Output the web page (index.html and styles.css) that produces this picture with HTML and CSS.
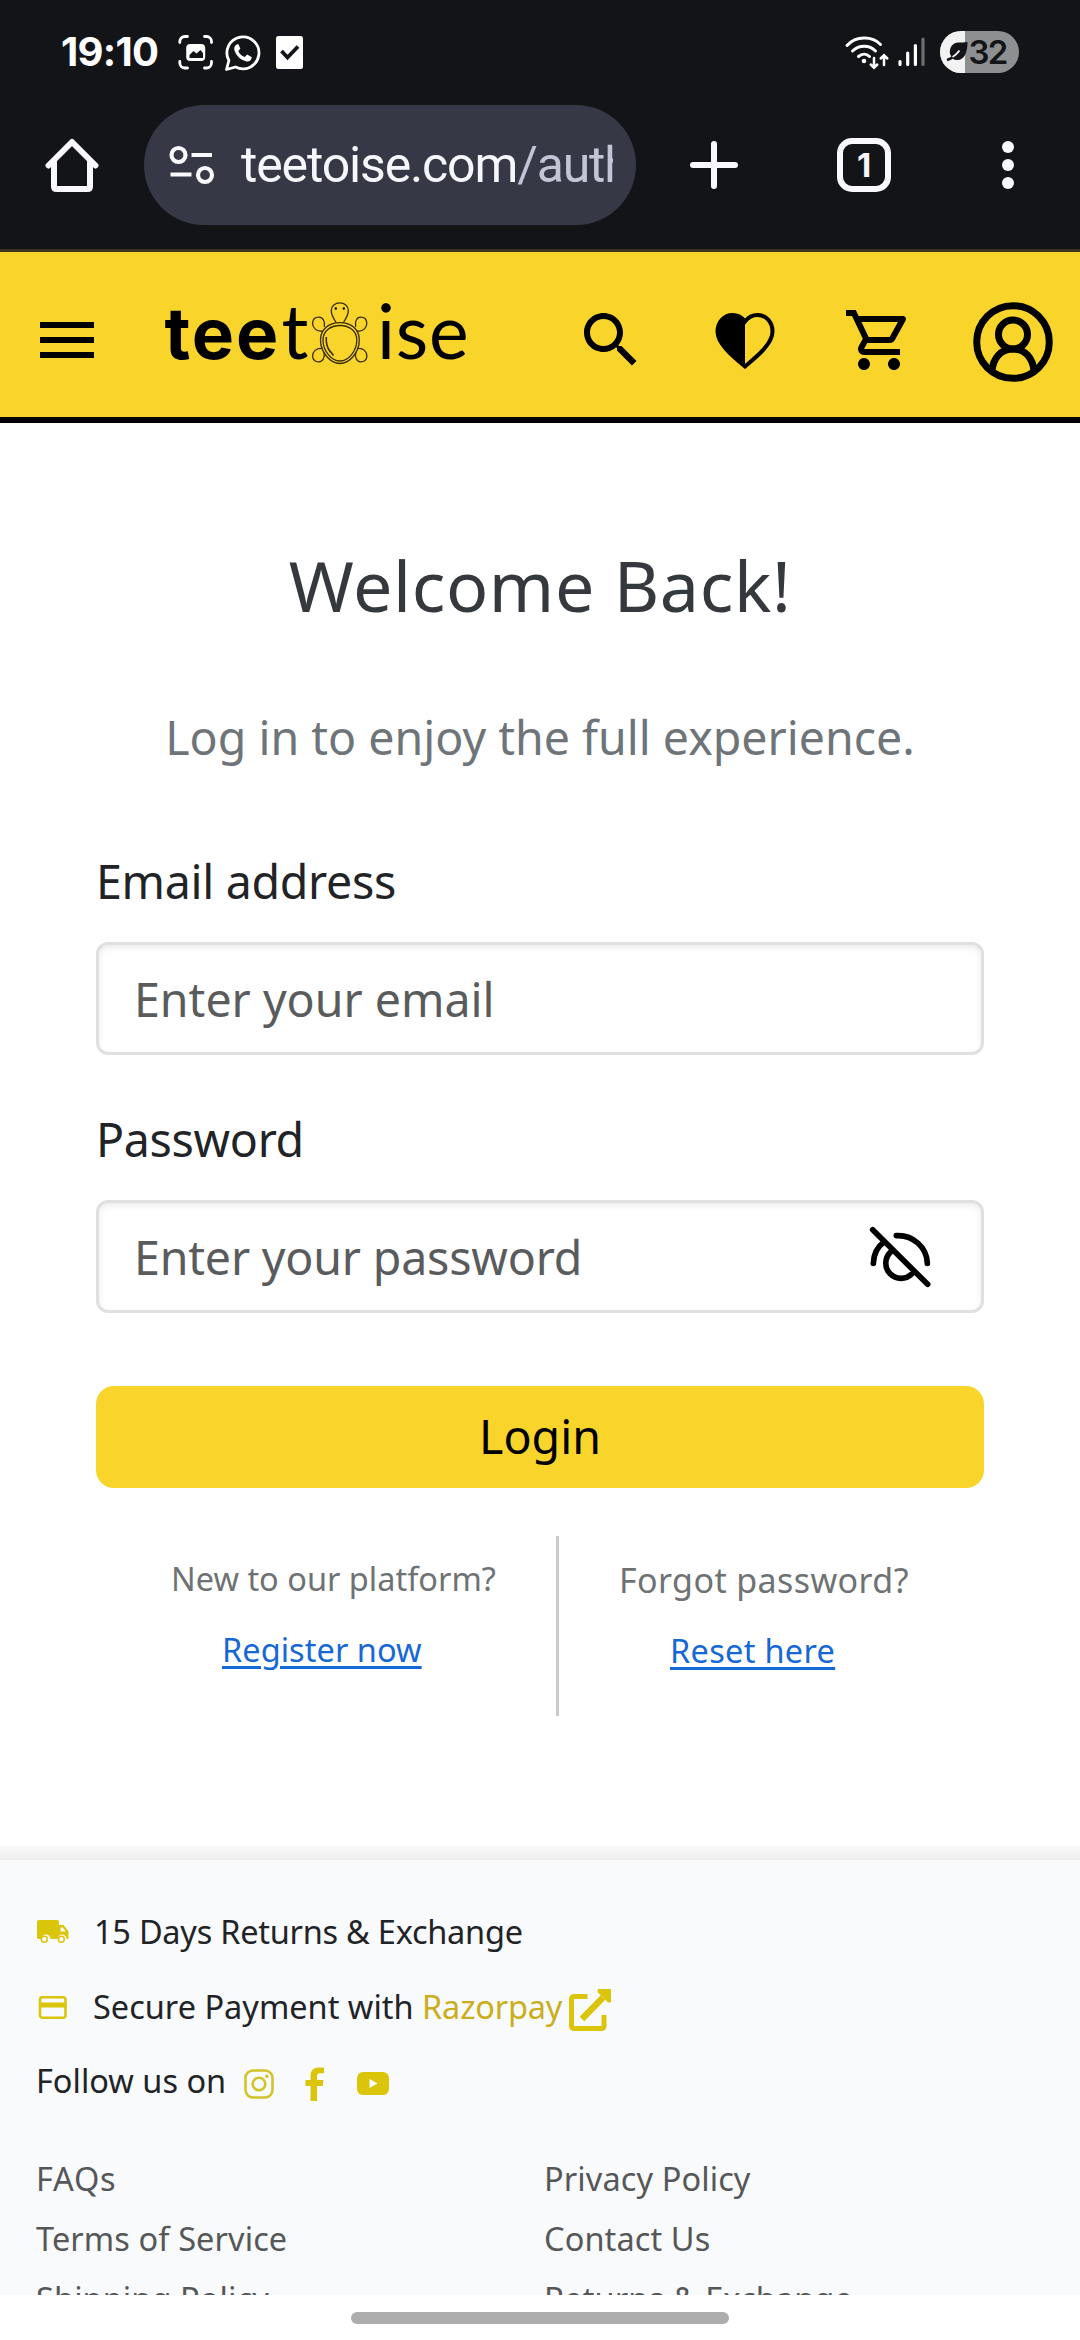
FILE: index.html
```html
<!DOCTYPE html>
<html lang="en">
<head>
<meta charset="utf-8">
<title>Teetoise - Login</title>
<link rel="stylesheet" href="styles.css">
</head>
<body>
<div class="chrome">
  <div class="status">
    <span class="clock">19:10</span>
    <svg class="st-shot" width="36" height="36" viewBox="0 0 36 36" fill="none" stroke="#fff" stroke-width="2.8" stroke-linecap="round">
      <path d="M1.8 8.500V7.500a5 5 0 0 1 5-5H9.500M26.500 2.500H28.500a5 5 0 0 1 5 5V8.500M1.800 27.500V29a5 5 0 0 0 5 5H9.500M26.500 34H28.500a5 5 0 0 0 5-5V27.500"/>
      <rect x="8.200" y="10" width="19" height="17" rx="4" fill="#fff" stroke="none"/>
      <path d="M11.500 24v-3l4-4 3 2.500 4-3.500 2.500 3V24z" fill="#131418" stroke="none"/>
    </svg>
    <svg class="st-wa" width="38" height="38" viewBox="0 0 38 38">
      <path d="M2.500 35.500l2.400-9A16 16 0 1 1 11.500 33z" fill="none" stroke="#fff" stroke-width="2.800" stroke-linejoin="round"/>
      <path d="M13.200 10.200c-2.600 1-3.600 3.600-2.600 6.600 2 5.400 6 9 11.200 10.400 3 .7 5.800-.6 6-4l-4.600-2.600-2.600 2.500c-2.800-1-5.200-3.200-6.300-6l2-2.300-1.800-4.600z" fill="#fff"/>
    </svg>
    <svg class="st-check" width="27" height="33" viewBox="0 0 27 33">
      <rect width="27" height="33" rx="2.500" fill="#fff"/>
      <path d="M5.500 15l6 6.500L22 10.500" fill="none" stroke="#131418" stroke-width="3.800"/>
    </svg>
    <svg class="st-wifi" width="46" height="38" viewBox="0 0 46 38" fill="none" stroke="#fff" stroke-width="3" stroke-linecap="round">
      <path d="M3 11.500C12 1.800 28 1.800 36.500 10.500M8.500 17c6.500-6.500 17-6.500 23 0M14.500 22.500c3.500-3 8-3 11 0"/>
      <circle cx="20" cy="27" r="2.300" fill="#fff" stroke="none"/>
      <path d="M30 24v9M26.700 30.500l3.300 3.200 3.300-3.200M40 31V21.500M36.700 24.500l3.300-3.200 3.300 3.200" stroke-width="2.500"/>
    </svg>
    <svg class="st-signal" width="28" height="30" viewBox="0 0 28 30" stroke="#fff" stroke-width="3.200" stroke-linecap="round">
      <path d="M2 24.500v3M9.700 16v11.500M17.400 8.500v19"/>
      <path d="M25 2v25.500" stroke="#6d6e71"/>
    </svg>
    <svg class="st-batt" width="79" height="42" viewBox="0 0 79 42">
      <rect width="79" height="42" rx="21" fill="#8e8f91"/>
      <path d="M21 0a21 21 0 0 0 0 42h4V0z" fill="#f2f2f3"/>
      <path d="M10 23c-1-7 3-11 8-11.500 3-.3 6 .2 9.500-.5 0 10-3 18-10 18-2 0-3.500-.5-5-1.500z" fill="#131418"/>
      <path d="M7 29c6-2 9-5 12-9" fill="none" stroke="#131418" stroke-width="2.800"/>
      <path d="M12.500 26c3.500-2 5-4 7-6.500" fill="none" stroke="#f2f2f3" stroke-width="1.800"/>
      <text x="28.500" y="32.500" class="batt-text">32</text>
    </svg>
  </div>
  <div class="toolbar">
    <svg class="tb-home" width="54" height="54" viewBox="0 0 54 54" fill="none" stroke="#f8f8fd" stroke-width="6" stroke-linecap="round" stroke-linejoin="round">
      <path d="M3.500 27.500L27 4l23.500 23.500M9 24v24.500q0 2.500 2.500 2.500h31q2.500 0 2.500-2.500V24"/>
    </svg>
    <div class="omnibox">
      <svg width="46" height="40" viewBox="0 0 46 40" fill="none" stroke="#f8f8fd" stroke-width="4.200">
        <circle cx="9.500" cy="10" r="7"/><circle cx="36" cy="30" r="7"/>
        <path d="M22.500 10H43M1.500 29.500H22.500"/>
      </svg>
      <div class="url">teetoise.com<span class="path">/auth</span></div>
    </div>
    <svg class="tb-plus" width="48" height="50" viewBox="0 0 48 50" stroke="#f8f8fd" stroke-width="6" stroke-linecap="round"><path d="M24 4v42M3 25h42"/></svg>
    <div class="tabs">1</div>
    <svg class="tb-more" width="12" height="48" viewBox="0 0 12 48" fill="#f8f8fd"><circle cx="6" cy="6" r="6"/><circle cx="6" cy="24" r="6"/><circle cx="6" cy="42" r="6"/></svg>
  </div>
</div>

<header class="site-header">
  <svg class="i-menu" width="72" height="72" viewBox="0 0 24 24"><path d="M3 18h18v-2H3v2zm0-5h18v-2H3v2zm0-7v2h18V6H3z"/></svg>
  <svg class="logo" width="310" height="76" viewBox="160 298 310 76">
    <text class="logo-bold" x="164.500" y="359">tee</text>
    <text class="logo-thin" x="281.500" y="359">t</text>
    <text class="logo-thin wide" x="377" y="359">ise</text>
    <g fill="none" stroke="#3a2d08" stroke-width="1.300">
      <path d="M336 322.500C332 316 331 314 331.300 310.500a8.300 7.500 0 0 1 17 0C348.500 314 347 317 343.500 322.500"/>
      <path d="M340 322.700C352 322.700 359.300 330 359.300 340C359.300 352 350 363.500 340 363.500S320.500 352 320.500 340C320.500 330 328 322.700 340 322.700z"/>
      <path d="M340 325.500C350 325.500 356.800 331.500 356.800 340C356.800 350.500 349 361 340 361S323 350.500 323 340C323 331.500 330 325.500 340 325.500z"/>
      <path d="M322 331C316 332 312.400 327 312.600 323C312.800 319 315.500 317.200 319 317.200C323 317.200 325.500 322 324.300 327"/>
      <path d="M357.500 331C363.500 332 367 327 366.800 323C366.600 319 364 317.200 360.500 317.200C356.500 317.200 354.500 322 355.700 327"/>
      <path d="M322.500 348.500C316 347.500 312.600 352 312.600 356C312.600 360 315.500 362 319 361.800C323 361.500 325 357 324 352"/>
      <path d="M357 348.500C363.500 347.500 366.900 352 366.900 356C366.900 360 364 362 360.500 361.800C356.500 361.500 354.700 357 355.700 352"/>
      <path d="M326.300 337c-.5 6 1 11 4 15M330 351l3.500 4.500" stroke-width="1.600"/>
    </g>
    <circle cx="335.800" cy="308.500" r="1.200"/><circle cx="343.800" cy="308.500" r="1.200"/>
  </svg>
  <svg class="i-search" width="72" height="72" viewBox="0 0 24 24"><path d="M15.500 14h-.79l-.28-.27C15.410 12.590 16 11.110 16 9.500 16 5.910 13.090 3 9.500 3S3 5.910 3 9.500 5.910 16 9.500 16c1.610 0 3.090-.59 4.230-1.570l.27.28v.79l5 4.990L20.490 19l-4.990-5zm-6 0C7.010 14 5 11.990 5 9.500S7.010 5 9.500 5 14 7.010 14 9.500 11.990 14 9.500 14z"/></svg>
  <svg class="i-heart" width="60" height="56" viewBox="0 0 60 56">
    <path d="M30 53.500C20 45 2.500 31.500 2.500 18.500C2.500 9 9.500 2 17.500 2C22.500 2 27 4.500 30 8.500C33 4.500 37.500 2 42.500 2C51 2 57.500 9 57.500 18.500C57.500 31.500 40 45 30 53.500z" fill="none" stroke="#000" stroke-width="4"/>
    <path d="M30 54C20 45 2.500 31.500 2.500 18.500C2.500 9 9.500 2 17.500 2C22.500 2 27 4.500 30 8.500z"/>
  </svg>
  <svg class="i-cart" width="72" height="72" viewBox="0 0 24 24"><path d="M15.550 13c.75 0 1.410-.41 1.750-1.030l3.580-6.490c.37-.66-.11-1.480-.87-1.480H5.210l-.94-2H1v2h2l3.600 7.590-1.350 2.440C4.520 15.370 5.480 17 7 17h12v-2H7l1.100-2h7.450zM6.160 6h12.150l-2.760 5H8.530L6.160 6zM7 18c-1.100 0-1.990.9-1.990 2S5.900 22 7 22s2-.9 2-2-.9-2-2-2zm10 0c-1.100 0-1.990.9-1.990 2s.89 2 1.990 2 2-.9 2-2-.9-2-2-2z"/></svg>
  <svg class="i-user" width="80" height="80" viewBox="0 0 80 80" fill="none" stroke="#000" stroke-width="7">
    <circle cx="40" cy="40" r="36.300"/><circle cx="40" cy="32.500" r="14.500"/>
    <path d="M19 69C20 56 28 47 40 47S60 56 61 69"/>
  </svg>
</header>

<main class="login">
  <h1>Welcome Back!</h1>
  <p class="lead">Log in to enjoy the full experience.</p>
  <label class="label">Email address</label>
  <div class="input"><span>Enter your email</span></div>
  <label class="label second">Password</label>
  <div class="input pw"><span>Enter your password</span>
    <svg class="eye" width="80" height="80" viewBox="0 0 240 240" fill="none" stroke="#000" stroke-width="17" stroke-linecap="round">
      <path d="M38 44L203 208M109 62C160 59 201 98 202 145M40 145C41 118 52 96 71 82M91 112A45.500 45.500 0 0 0 155 177"/>
    </svg>
  </div>
  <button class="btn">Login</button>
  <div class="options">
    <div class="option left">
      <p>New to our platform?</p>
      <a href="#">Register now</a>
    </div>
    <div class="option right">
      <p>Forgot password?</p>
      <a href="#">Reset here</a>
    </div>
  </div>
</main>

<footer class="footer">
  <div class="row">
    <svg class="f-icon" width="34" height="26" viewBox="0 0 34 26" fill="#dbc50a">
      <path d="M3 1h18q2 0 2 2v3h4.500l5 6.500V20h-2a4.500 4.500 0 0 0-9 0h-7a4.500 4.500 0 0 0-9 0H2.500Q1 20 1 18.500V3q0-2 2-2z"/>
      <path d="M24.500 8.500h2.300l3 4h-5.300z" fill="#f9fafc"/>
      <circle cx="8.300" cy="20.300" r="3" fill="#f9fafc" stroke="#dbc50a" stroke-width="1.600"/><circle cx="25.300" cy="20.300" r="3" fill="#f9fafc" stroke="#dbc50a" stroke-width="1.600"/>
    </svg>
    <span class="returns">15 Days Returns &amp; Exchange</span>
  </div>
  <div class="row">
    <svg class="f-icon" width="34" height="26" viewBox="0 0 34 26">
      <rect x="4" y="3.200" width="25.500" height="20.600" rx="2.500" fill="none" stroke="#dbc50a" stroke-width="2.600"/><path d="M3 8.500h27v5H3z" fill="#dbc50a"/>
    </svg>
    <span class="secure">Secure Payment with <a href="#">Razorpay</a></span>
    <svg class="ext" width="42" height="42" viewBox="0 0 42 42" fill="none" stroke="#dbc50a" stroke-width="5">
      <path d="M18.500 7.500H5.500Q2.500 7.500 2.500 10.500V36.500Q2.500 39.500 5.500 39.500H32Q35 39.500 35 36.500V26"/>
      <path d="M13 30L34 8.500" stroke-width="6.500"/>
      <path d="M29 0H42V13.500H39L28.500 3z" fill="#dbc50a" stroke="none"/>
    </svg>
  </div>
  <div class="row social">
    <span class="follow">Follow us on</span>
    <svg class="ig" width="30" height="30" viewBox="0 0 30 30" fill="none" stroke="#d3c32a" stroke-width="2.600"><rect x="1.500" y="1.500" width="27" height="27" rx="7.500"/><circle cx="15" cy="15" r="6.300"/><circle cx="22.800" cy="7.200" r="1.700" fill="#d3c32a" stroke="none"/></svg>
    <svg class="fb" width="20" height="34" viewBox="0 0 20 34" fill="#dbc50a"><path d="M5.500 34V19H.5v-6h5V9C5.500 3.500 8.500.5 13.500.5H19v5.700h-3.500c-3 0-3.500 1.500-3.500 3.500V13h6.500l-.8 6H12v15z"/></svg>
    <svg class="yt" width="32" height="23" viewBox="0 0 32 23"><rect width="32" height="23" rx="6" fill="#dbc50a"/><path d="M12.500 7l8 4.500-8 4.500z" fill="#fff"/></svg>
  </div>
  <nav class="links">
    <a class="faq">FAQs</a><a>Privacy Policy</a>
    <a>Terms of Service</a><a>Contact Us</a>
    <a>Shipping Policy</a><a>Returns &amp; Exchange</a>
  </nav>
</footer>
<div class="gesture"><div class="pill"></div></div>
</body>
</html>
```
FILE: styles.css
```css
* { box-sizing: border-box; }
html, body { margin: 0; padding: 0; }
body {
  width: 1080px;
  height: 2340px;
  display: flex;
  flex-direction: column;
  overflow: hidden;
  background: #fff;
  font-family: "Noto Sans", "Open Sans", sans-serif;
  color: #212327;
}
svg { display: block; flex: none; }
h1, p { margin: 0; font-weight: 400; }

/* Phone status bar and browser toolbar */
.chrome {
  height: 252px;
  flex: none;
  background: #131418;
  border-bottom: 3px solid #403521;
}
.status { height: 105px; display: flex; align-items: flex-start; padding-left: 61px; }
.clock {
  width: 117px;
  margin-top: 27px;
  font: 700 40px/49px Inter, sans-serif;
  letter-spacing: -0.7px;
  color: #fff;
}
.st-shot { margin-top: 34px; }
.st-wa { margin: 34px 0 0 10px; }
.st-check { margin: 36px 0 0 14px; }
.st-wifi { margin: 34px 0 0 541px; }
.st-signal { margin: 37px 0 0 8px; }
.st-batt { margin: 31px 0 0 14px; }
.batt-text { font: 600 33px Inter, sans-serif; letter-spacing: -1.8px; fill: #131418; }

.toolbar { height: 120px; display: flex; align-items: center; padding-left: 45px; }
.omnibox {
  width: 492px;
  height: 120px;
  margin-left: 45px;
  padding-left: 25px;
  border-radius: 60px;
  background: #363846;
  display: flex;
  align-items: center;
}
.url {
  width: 372px;
  margin-left: 26px;
  overflow: hidden;
  white-space: nowrap;
  font: 400 50px/60px Roboto, sans-serif;
  letter-spacing: -1.15px;
  color: #f6f6fd;
}
.path { color: #c3c5d6; }
.tb-plus { margin-left: 54px; }
.tabs {
  width: 54px;
  height: 54px;
  margin-left: 99px;
  border: 6px solid #f8f8fd;
  border-radius: 15px;
  color: #f8f8fd;
  font: 700 33px/42px Inter, sans-serif;
  text-align: center;
}
.tb-more { margin-left: 111px; }

/* Site header */
.site-header {
  height: 171px;
  flex: none;
  display: flex;
  align-items: flex-start;
  padding-left: 31px;
  background: #f9d42b;
  border-bottom: 6px solid #000;
}
.i-menu, .i-search, .i-cart { margin-top: 52px; }
.logo { margin: 46px 0 0 57px; overflow: visible; }
.logo-bold { font: 700 71px Inter, sans-serif; letter-spacing: 2px; }
.logo-thin { font: 400 75px Lato, sans-serif; }
.wide { letter-spacing: 0.8px; }
.i-search { margin-left: 105px; }
.i-heart { margin: 61px 0 0 68px; }
.i-cart { margin-left: 68px; }
.i-user { margin: 49.500px 0 0 58px; }

/* Login form */
.login {
  height: 1437px;
  flex: none;
  padding: 120px 96px 0;
  font-size: 46.5px;
  line-height: 70px;
  background: linear-gradient(rgba(0, 0, 0, 0.02), rgba(0, 0, 0, 0.08)) bottom / 100% 14px no-repeat #fff;
}
h1 { font-size: 70px; line-height: 84px; letter-spacing: 0.6px; color: #35393d; text-align: center; }
.lead { margin-top: 75px; text-align: center; color: #6e7478; }
.label { display: block; margin: 74px 0 26px; letter-spacing: -0.3px; }
.label.second { margin-top: 49px; }
.input {
  height: 113px;
  display: flex;
  align-items: center;
  justify-content: space-between;
  padding: 0 41px 0 35px;
  border: 3px solid #dfe0e2;
  border-radius: 12px;
  box-shadow: inset 0 3px 6px rgba(0, 0, 0, 0.075);
  color: #595b5d;
}
.input span { letter-spacing: 0; }
.input.pw span { letter-spacing: -0.18px; }
.eye { margin-top: -3px; }
.btn {
  display: block;
  width: 100%;
  height: 102px;
  margin-top: 73px;
  padding: 0 0 2px;
  border: 0;
  border-radius: 18px;
  background: #f9d42b;
  font: inherit;
  color: #000;
}
.options { display: flex; height: 180px; margin-top: 48px; font-size: 32.5px; line-height: 48px; }
.option p { color: #6e7274; }
.option a { display: inline-block; margin-top: 23px; color: #1668d4; text-decoration: underline; text-decoration-thickness: 3px; text-underline-offset: 4px; }
.left { width: 463px; padding: 19px 0 0 75px; border-right: 3px solid #ccc; }
.left a { margin-left: 51px; letter-spacing: 0.05px; }
.right { padding: 20px 0 0 60px; }
.right p { font-size: 34px; letter-spacing: 0.4px; }
.right a { margin-left: 51px; letter-spacing: 0.3px; }

/* Footer */
.footer {
  height: 435px;
  flex: none;
  padding: 42px 36px 0;
  overflow: hidden;
  background: #f9fafc;
  font-size: 32.5px;
  white-space: nowrap;
}
.row { height: 60px; margin-bottom: 14.5px; display: flex; align-items: center; line-height: 60px; }
.f-icon { margin-right: 23px; }
.returns { letter-spacing: -0.25px; margin-left: 1px; }
.secure a { color: #cbae20; letter-spacing: -0.2px; text-decoration: none; }
.ext { margin: 6px 0 0 7px; }
.follow { letter-spacing: 0; }
.ig { margin: 5px 0 0 18px; }
.fb { margin: 5px 0 0 31px; }
.yt { margin: 5px 0 0 32px; }
.social { margin-bottom: 0; }
.links { display: grid; grid-template-columns: 508px 1fr; margin-top: 38px; line-height: 60px; color: #555759; letter-spacing: 0.1px; }
.faq { letter-spacing: 0.8px; }

.gesture { height: 45px; flex: none; padding-top: 17px; background: #fff; }
.pill { width: 378px; height: 12px; margin: 0 auto; border-radius: 6px; background: #adadad; }
```
